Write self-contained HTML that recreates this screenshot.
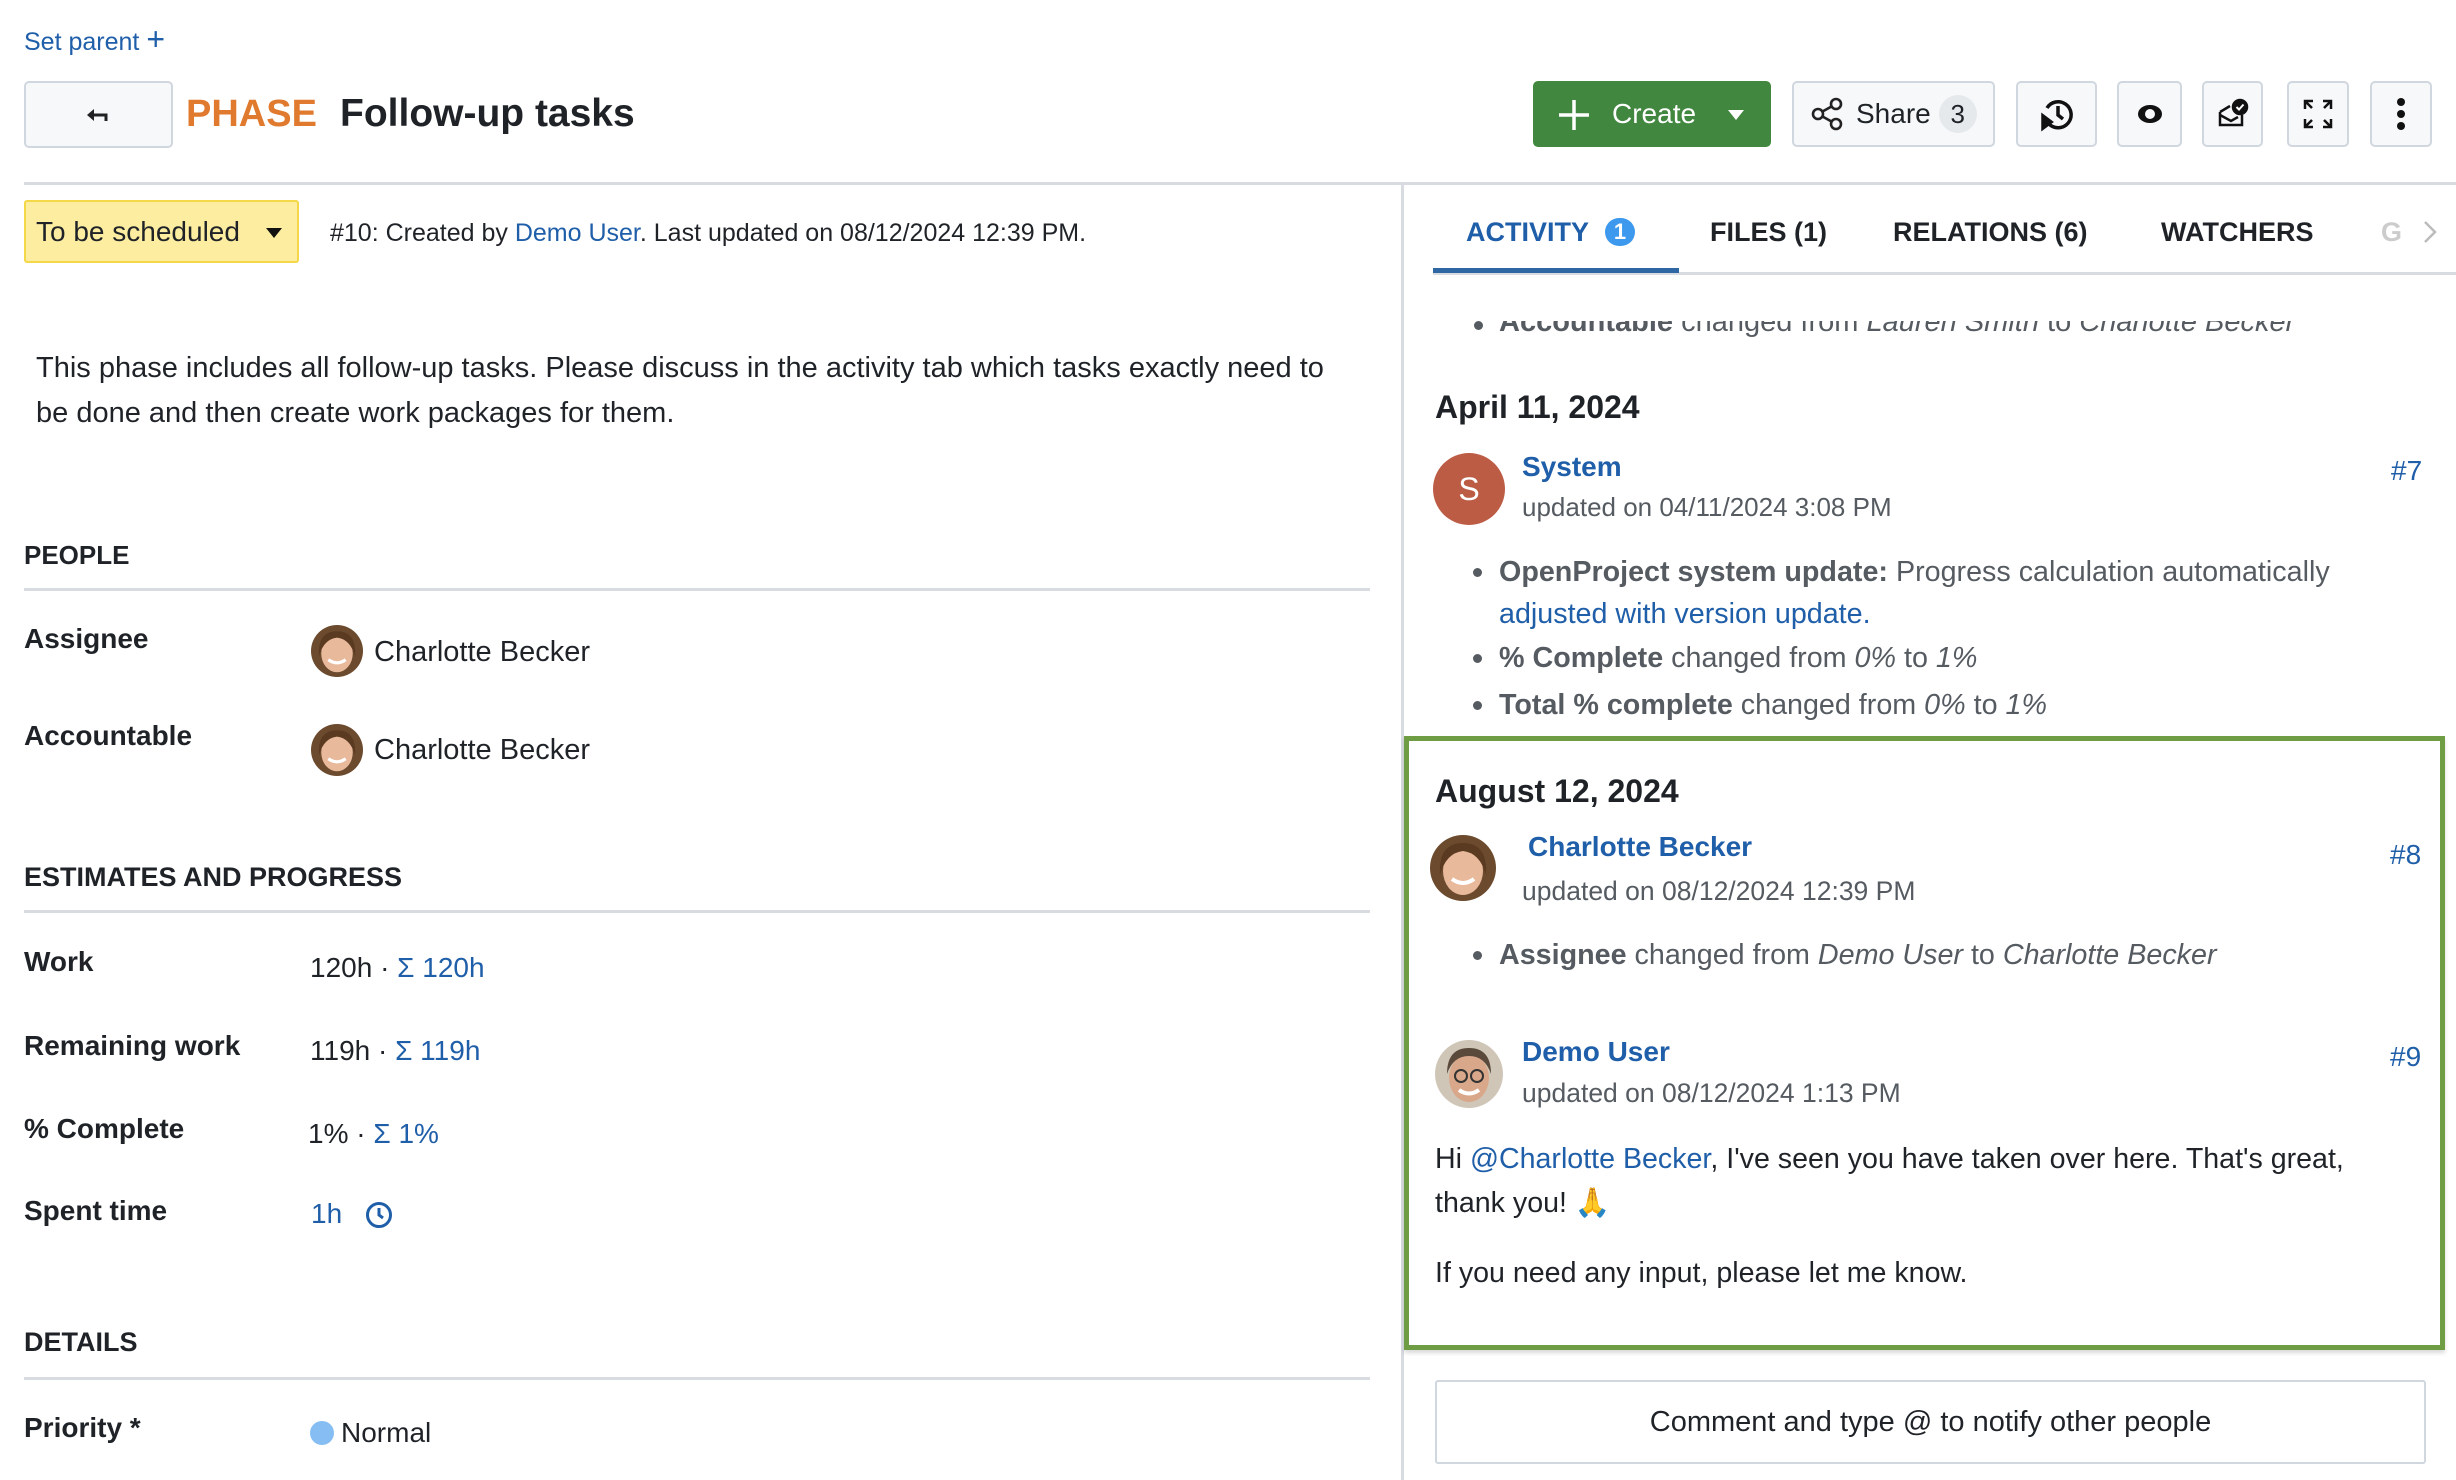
<!DOCTYPE html>
<html><head><meta charset="utf-8">
<style>
*{box-sizing:border-box;margin:0;padding:0}
body{width:2456px;height:1480px;overflow:hidden;background:#fff;font-family:"Liberation Sans",sans-serif;color:#1f2328;position:relative}
.t{position:absolute;white-space:nowrap;line-height:34px;font-size:28px}
.b{font-weight:bold}
.a{color:#1f5ea8}
.g{color:#555b61}
.btn{position:absolute;background:#f6f8fa;border:2px solid #d0d7de;border-radius:5px;display:flex;align-items:center;justify-content:center}
.hr{position:absolute;height:3px;background:#d8dbe0}
.av{position:absolute;border-radius:50%;overflow:hidden}
.bul{position:absolute;width:9px;height:9px;border-radius:50%;background:#555b61}
</style></head><body>

<div class="t a" style="left:24px;top:22px;font-size:25px">Set parent <span style="font-size:32px">+</span></div>

<div class="btn" style="left:24px;top:81px;width:149px;height:67px">
<svg width="30" height="20" viewBox="0 0 30 20"><path d="M3 10 L10 4 V16 Z" fill="#222"/><path d="M9 10 H22 V16" stroke="#222" stroke-width="3" fill="none"/></svg></div>
<div class="t b" style="left:186px;top:90px;font-size:38px;line-height:48px;color:#e07a2e">PHASE</div>
<div class="t b" style="left:340px;top:90px;font-size:39px;line-height:48px;color:#1f2328">Follow-up tasks</div>

<div style="position:absolute;left:1533px;top:81px;width:238px;height:66px;background:#41873f;border-radius:5px;color:#fff">
<svg style="position:absolute;left:24px;top:17px" width="34" height="34" viewBox="0 0 34 34"><path d="M17 2V32M2 17H32" stroke="#fff" stroke-width="3.5"/></svg>
<div class="t" style="left:79px;top:16px;font-size:28px;color:#fff">Create</div>
<svg style="position:absolute;left:194px;top:28px" width="18" height="12" viewBox="0 0 18 12"><path d="M1 1H17L9 11Z" fill="#fff"/></svg></div>

<div class="btn" style="left:1792px;top:81px;width:203px;height:66px;justify-content:flex-start">
<svg style="margin-left:16px" width="34" height="34" viewBox="0 0 34 34" fill="none" stroke="#222" stroke-width="2.6"><circle cx="8" cy="17" r="5"/><circle cx="26" cy="7" r="5"/><circle cx="26" cy="27" r="5"/><path d="M12.5 14.5L21.5 9.5M12.5 19.5L21.5 24.5"/></svg>
<span style="font-size:28px;margin-left:12px">Share</span>
<span style="margin-left:8px;width:38px;height:38px;border-radius:19px;background:#e6e9ec;display:inline-flex;align-items:center;justify-content:center;font-size:26px">3</span></div>

<div class="btn" style="left:2016px;top:81px;width:81px;height:66px"><svg width="40" height="40" viewBox="0 0 40 40" fill="none" stroke="#111" stroke-width="3.5"><path d="M10 14A13 13 0 1 1 12 30"/><path d="M21 12V21L26 25"/><path d="M6 22L14 28L6 34Z" fill="#111"/></svg></div>
<div class="btn" style="left:2117px;top:81px;width:65px;height:66px"><svg width="32" height="24" viewBox="0 0 32 24"><ellipse cx="16" cy="12" rx="12" ry="9" fill="#111"/><ellipse cx="16" cy="12" rx="5" ry="5" fill="#f6f8fa"/></svg></div>
<div class="btn" style="left:2202px;top:81px;width:61px;height:66px"><svg width="34" height="34" viewBox="0 0 34 34" fill="none" stroke="#111" stroke-width="2.5"><path d="M4 15L14 9M4 15V28H26V18"/><path d="M4 18L15 24L22 20"/><circle cx="24" cy="10" r="7" fill="#111"/><path d="M20.5 10L23 12.5L27.5 7.5" stroke="#fff" stroke-width="2"/></svg></div>
<div class="btn" style="left:2287px;top:81px;width:62px;height:66px"><svg width="32" height="32" viewBox="0 0 32 32" fill="none" stroke="#111" stroke-width="2.5"><path d="M3 11V3H11M3 3L10 10M21 3H29V11M29 3L22 10M3 21V29H11M3 29L10 22M29 21V29H21M29 29L22 22"/></svg></div>
<div class="btn" style="left:2370px;top:81px;width:62px;height:66px"><svg width="10" height="34" viewBox="0 0 10 34"><circle cx="5" cy="5" r="4" fill="#111"/><circle cx="5" cy="17" r="4" fill="#111"/><circle cx="5" cy="29" r="4" fill="#111"/></svg></div>

<div class="hr" style="left:24px;top:182px;width:2432px"></div>
<div style="position:absolute;left:1401px;top:184px;width:3px;height:1296px;background:#d8dbe0"></div>

<div style="position:absolute;left:24px;top:200px;width:275px;height:63px;background:#fdeda0;border:2px solid #f5d848;border-radius:3px"></div>
<div class="t" style="left:36px;top:215px;font-size:28px">To be scheduled</div>
<svg style="position:absolute;left:265px;top:227px" width="18" height="12" viewBox="0 0 18 12"><path d="M1 1H17L9 11Z" fill="#111"/></svg>
<div class="t" style="left:330px;top:216px;font-size:25px">#10: Created by <span class="a">Demo User</span>. Last updated on 08/12/2024 12:39 PM.</div>

<div class="t" style="left:36px;top:351px;font-size:29px">This phase includes all follow-up tasks. Please discuss in the activity tab which tasks exactly need to</div>
<div class="t" style="left:36px;top:396px;font-size:29px">be done and then create work packages for them.</div>

<div class="t b" style="left:24px;top:538px;font-size:26px">PEOPLE</div>
<div class="hr" style="left:24px;top:588px;width:1346px"></div>
<div class="t b" style="left:24px;top:622px">Assignee</div>
<div class="t b" style="left:24px;top:719px">Accountable</div>
<div class="av" style="left:311px;top:625px;width:52px;height:52px;background:#6b4a2e">
<svg width="52" height="52" viewBox="0 0 66 66"><ellipse cx="33" cy="36" rx="20" ry="24" fill="#e9b99b"/><path d="M10 40Q8 8 33 8Q58 8 56 40Q50 18 33 16Q16 18 10 40Z" fill="#5b3a22"/><path d="M22 44Q33 52 44 44" stroke="#fff" stroke-width="4" fill="none"/></svg></div>
<div class="av" style="left:311px;top:724px;width:52px;height:52px;background:#6b4a2e">
<svg width="52" height="52" viewBox="0 0 66 66"><ellipse cx="33" cy="36" rx="20" ry="24" fill="#e9b99b"/><path d="M10 40Q8 8 33 8Q58 8 56 40Q50 18 33 16Q16 18 10 40Z" fill="#5b3a22"/><path d="M22 44Q33 52 44 44" stroke="#fff" stroke-width="4" fill="none"/></svg></div>
<div class="t" style="left:374px;top:635px;font-size:29px">Charlotte Becker</div>
<div class="t" style="left:374px;top:733px;font-size:29px">Charlotte Becker</div>

<div class="t b" style="left:24px;top:860px;font-size:27px">ESTIMATES AND PROGRESS</div>
<div class="hr" style="left:24px;top:910px;width:1346px"></div>
<div class="t b" style="left:24px;top:945px">Work</div>
<div class="t b" style="left:24px;top:1029px">Remaining work</div>
<div class="t b" style="left:24px;top:1112px">% Complete</div>
<div class="t b" style="left:24px;top:1194px">Spent time</div>
<div class="t" style="left:310px;top:951px;font-size:28px">120h · <span class="a">Σ 120h</span></div>
<div class="t" style="left:310px;top:1034px;font-size:28px">119h · <span class="a">Σ 119h</span></div>
<div class="t" style="left:308px;top:1117px;font-size:28px">1% · <span class="a">Σ 1%</span></div>
<div class="t a" style="left:311px;top:1197px;font-size:28px">1h</div>
<svg style="position:absolute;left:364px;top:1200px" width="30" height="30" viewBox="0 0 30 30" fill="none" stroke="#1f5ea8" stroke-width="3"><circle cx="15" cy="15" r="11.5"/><path d="M15 8V15L19 18"/></svg>

<div class="t b" style="left:24px;top:1325px;font-size:27px">DETAILS</div>
<div class="hr" style="left:24px;top:1377px;width:1346px"></div>
<div class="t b" style="left:24px;top:1411px">Priority *</div>
<div style="position:absolute;left:310px;top:1421px;width:24px;height:24px;border-radius:50%;background:#86bdf2"></div>
<div class="t" style="left:341px;top:1416px;font-size:28px">Normal</div>

<!-- right panel -->
<div class="t b" style="left:1466px;top:215px;font-size:27px;color:#1f5ea8">ACTIVITY</div>
<div style="position:absolute;left:1605px;top:218px;width:30px;height:28px;border-radius:14px;background:#3d99ee;color:#fff;font-size:22px;font-weight:bold;text-align:center;line-height:28px">1</div>
<div class="t b" style="left:1710px;top:215px;font-size:27px">FILES (1)</div>
<div class="t b" style="left:1893px;top:215px;font-size:27px">RELATIONS (6)</div>
<div class="t b" style="left:2161px;top:215px;font-size:27px">WATCHERS</div>
<div class="t b" style="left:2381px;top:215px;font-size:27px;color:#ccc">G</div>
<svg style="position:absolute;left:2423px;top:220px" width="14" height="24" viewBox="0 0 14 24"><path d="M2 2L12 12L2 22" stroke="#bbb" stroke-width="2.5" fill="none"/></svg>
<div class="hr" style="left:1433px;top:272px;width:1023px"></div>
<div style="position:absolute;left:1433px;top:268px;width:246px;height:5px;background:#2f66a4"></div>

<div style="position:absolute;left:1404px;top:321px;width:1052px;height:40px;overflow:hidden">
<div class="bul" style="left:70px;top:0px"></div>
<div class="t g b" style="left:95px;top:-16px;font-size:29px">Accountable <span style="font-weight:normal">changed from <i>Lauren Smith</i> to <i>Charlotte Becker</i></span></div>
</div>

<div class="t b" style="left:1435px;top:388px;font-size:32px;line-height:38px">April 11, 2024</div>
<div class="av" style="left:1433px;top:453px;width:72px;height:72px;background:#bc5c45;color:#fff;font-size:32px;text-align:center;line-height:72px">S</div>
<div class="t b a" style="left:1522px;top:450px;font-size:28px">System</div>
<div class="t g" style="left:1522px;top:490px;font-size:26px">updated on 04/11/2024 3:08 PM</div>
<div class="t a" style="left:2391px;top:454px;font-size:28px">#7</div>
<div class="bul" style="left:1473px;top:568px"></div>
<div class="t g" style="left:1499px;top:555px;font-size:28.7px"><b>OpenProject system update:</b> Progress calculation automatically</div>
<div class="t a" style="left:1499px;top:597px;font-size:28.7px">adjusted with version update.</div>
<div class="bul" style="left:1473px;top:654px"></div>
<div class="t g" style="left:1499px;top:641px;font-size:28.7px"><b>% Complete</b> changed from <i>0%</i> to <i>1%</i></div>
<div class="bul" style="left:1473px;top:701px"></div>
<div class="t g" style="left:1499px;top:688px;font-size:28.7px"><b>Total % complete</b> changed from <i>0%</i> to <i>1%</i></div>

<div style="position:absolute;left:1404px;top:736px;width:1041px;height:614px;border:5px solid #6e9d44;box-shadow:0 3px 4px rgba(0,0,0,.15)"></div>
<div class="t b" style="left:1435px;top:772px;font-size:32px;line-height:38px">August 12, 2024</div>
<div class="av" style="left:1430px;top:835px;width:66px;height:66px;background:#6b4a2e">
<svg width="66" height="66" viewBox="0 0 66 66"><ellipse cx="33" cy="36" rx="20" ry="24" fill="#e9b99b"/><path d="M10 40Q8 8 33 8Q58 8 56 40Q50 18 33 16Q16 18 10 40Z" fill="#5b3a22"/><path d="M22 44Q33 52 44 44" stroke="#fff" stroke-width="4" fill="none"/></svg></div>
<div class="t b a" style="left:1528px;top:830px;font-size:28px">Charlotte Becker</div>
<div class="t g" style="left:1522px;top:874px;font-size:26.5px">updated on 08/12/2024 12:39 PM</div>
<div class="t a" style="left:2390px;top:838px;font-size:28px">#8</div>
<div class="bul" style="left:1473px;top:951px"></div>
<div class="t g" style="left:1499px;top:938px;font-size:28.7px"><b>Assignee</b> changed from <i>Demo User</i> to <i>Charlotte Becker</i></div>

<div class="av" style="left:1435px;top:1040px;width:68px;height:68px;background:#cfc6b8">
<svg width="68" height="68" viewBox="0 0 68 68"><ellipse cx="34" cy="38" rx="20" ry="24" fill="#d9a88a"/><path d="M12 34Q12 8 34 8Q56 8 56 34Q50 16 34 16Q18 16 12 34Z" fill="#5a4a3c"/><circle cx="26" cy="36" r="6" fill="none" stroke="#333" stroke-width="2"/><circle cx="42" cy="36" r="6" fill="none" stroke="#333" stroke-width="2"/><path d="M24 50Q34 57 44 50" stroke="#fff" stroke-width="4" fill="none"/></svg></div>
<div class="t b a" style="left:1522px;top:1035px;font-size:28px">Demo User</div>
<div class="t g" style="left:1522px;top:1076px;font-size:26.5px">updated on 08/12/2024 1:13 PM</div>
<div class="t a" style="left:2390px;top:1040px;font-size:28px">#9</div>
<div class="t" style="left:1435px;top:1142px;font-size:28.6px">Hi <span class="a">@Charlotte Becker</span>, I've seen you have taken over here. That's great,</div>
<div class="t" style="left:1435px;top:1186px;font-size:28.6px">thank you! 🙏</div>
<div class="t" style="left:1435px;top:1256px;font-size:28.6px">If you need any input, please let me know.</div>

<div style="position:absolute;left:1435px;top:1380px;width:991px;height:84px;border:2px solid #d0d7de;border-radius:3px"></div>
<div class="t" style="left:1435px;top:1405px;width:991px;text-align:center;font-size:29px">Comment and type @ to notify other people</div>
</body></html>
